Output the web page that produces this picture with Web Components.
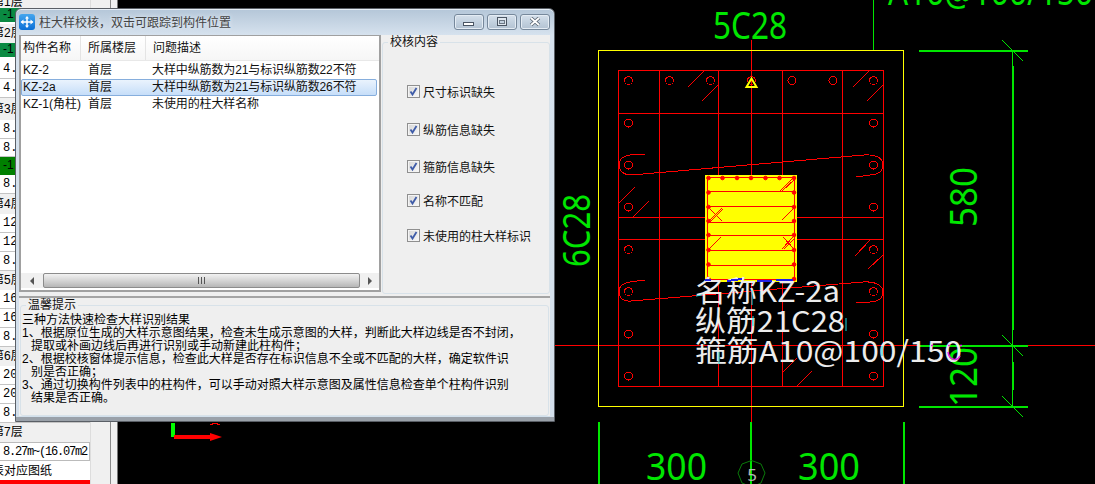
<!DOCTYPE html>
<html>
<head>
<meta charset="utf-8">
<title>柱大样校核</title>
<style>
html,body{margin:0;padding:0;background:#000;overflow:hidden;}
body{font:12px "Liberation Sans","Noto Sans CJK SC",sans-serif;}
</style>
</head>
<body>

<cad-app>
  <side-panel slot="side">
    <side-row kind="head" style="height:8px;line-height:4px">第1层</side-row>
    <side-row kind="green" style="height:14px;line-height:13px">-1</side-row>
    <side-row kind="blank" style="height:2px"></side-row>
    <side-row kind="head">第2层</side-row>
    <side-row kind="green" style="height:14px;line-height:13px">-1</side-row>
    <side-row kind="blank" style="height:3px"></side-row>
    <side-row kind="cell">4.</side-row>
    <side-row kind="cell">4.</side-row>
    <side-row kind="head" style="height:22px;line-height:22px">第3层</side-row>
    <side-row kind="cell">8.</side-row>
    <side-row kind="cell" style="height:18px">8.</side-row>
    <side-row kind="green" style="height:18px;line-height:17px;background:#008000">-1</side-row>
    <side-row kind="cell">8.</side-row>
    <side-row kind="head" style="height:20px;line-height:20px">第4层</side-row>
    <side-row kind="cell">12</side-row>
    <side-row kind="cell">12</side-row>
    <side-row kind="cell">8.</side-row>
    <side-row kind="head">第5层</side-row>
    <side-row kind="cell">16</side-row>
    <side-row kind="cell">16</side-row>
    <side-row kind="cell">8.</side-row>
    <side-row kind="head">第6层</side-row>
    <side-row kind="cell">20</side-row>
    <side-row kind="cell">20</side-row>
    <side-row kind="cell">8.</side-row>
    <side-row kind="head">第7层</side-row>
    <side-row kind="box">8.27m~(16.07m2</side-row>
    <side-row kind="head" style="background:#fff;line-height:20px">表对应图纸</side-row>
    <side-row kind="red"></side-row>
  </side-panel>
  <cad-canvas slot="canvas"></cad-canvas>
</cad-app>

<float-dialog caption="柱大样校核，双击可跟踪到构件位置">
  <issue-list slot="list">
    <issue-row name="KZ-2" floor="首层" desc="大样中纵筋数为21与标识纵筋数22不符"></issue-row>
    <issue-row name="KZ-2a" floor="首层" desc="大样中纵筋数为21与标识纵筋数26不符" selected></issue-row>
    <issue-row name="KZ-1(角柱)" floor="首层" desc="未使用的柱大样名称"></issue-row>
  </issue-list>
  <group-box slot="checks" legend="校核内容" style="height:259px">
    <div style="padding:35px 0 0 24px">
      <check-item style="margin-top:0">尺寸标识缺失</check-item>
      <check-item style="margin-top:24px">纵筋信息缺失</check-item>
      <check-item style="margin-top:23px">箍筋信息缺失</check-item>
      <check-item style="margin-top:20px">名称不匹配</check-item>
      <check-item style="margin-top:21px">未使用的柱大样标识</check-item>
    </div>
  </group-box>
  <group-box slot="tips" legend="温馨提示" style="height:118px">
    <tip-text>
      <div class="line">三种方法快速检查大样识别结果</div>
      <div class="line">1、根据原位生成的大样示意图结果，检查未生成示意图的大样，判断此大样边线是否不封闭，</div>
      <div class="line sub">提取或补画边线后再进行识别或手动新建此柱构件；</div>
      <div class="line">2、根据校核窗体提示信息，检查此大样是否存在标识信息不全或不匹配的大样，确定软件识</div>
      <div class="line sub">别是否正确；</div>
      <div class="line">3、通过切换构件列表中的柱构件，可以手动对照大样示意图及属性信息检查单个柱构件识别</div>
      <div class="line sub">结果是否正确。</div>
    </tip-text>
  </group-box>
</float-dialog>

<script>
const appTemplate = document.createElement("template");
appTemplate.innerHTML = `
<style>
:host{display:flex;width:1095px;height:484px;overflow:hidden;background:#000;}
.side{flex:0 0 91px;}
.split{flex:0 0 27px;display:flex;background:#f0f0f0;}
.split .a{flex:0 0 19px;}
.split .b{flex:0 0 1px;background:#8a8a8a;}
.split .c{flex:1;border-right:1px solid #777;}
.canvas{flex:1;}
</style>
<div class="side"><slot name="side"></slot></div>
<div class="split"><div class="a"></div><div class="b"></div><div class="c"></div></div>
<div class="canvas"><slot name="canvas"></slot></div>
`;
class CadApp extends HTMLElement {
  constructor() {
    super();
    this.attachShadow({ mode: "open" });
    this.shadowRoot.appendChild(appTemplate.content.cloneNode(true));
  }
}
customElements.define("cad-app", CadApp);

const sideTemplate = document.createElement("template");
sideTemplate.innerHTML = `
<style>
:host{display:flex;flex-direction:column;width:90px;height:484px;overflow:hidden;background:#fff;border-right:1px solid #ddd;}
</style>
<slot></slot>
`;
class SidePanel extends HTMLElement {
  constructor() {
    super();
    this.attachShadow({ mode: "open" });
    this.shadowRoot.appendChild(sideTemplate.content.cloneNode(true));
  }
}
customElements.define("side-panel", SidePanel);

const rowTemplate = document.createElement("template");
rowTemplate.innerHTML = `
<style>
:host{display:block;flex:none;box-sizing:border-box;height:19px;line-height:18px;overflow:hidden;white-space:nowrap;color:#000;font-size:12px;padding-left:3px;}
:host([kind=head]){background:#f0f0f0;padding-left:0;text-indent:-8px;font-family:"Liberation Sans","Noto Sans CJK SC",sans-serif;}
:host([kind=green]){background:#0a8a42;padding-left:3px;}
:host([kind=blank]){background:#fff;}
:host([kind=cell]){background:#fff;border-bottom:1px solid #c4c4c4;font-family:"Liberation Mono",monospace;font-size:12px;}
:host([kind=box]){background:#fff;border:1px solid #bbb;border-left:0;font-family:"Liberation Mono",monospace;letter-spacing:-1.2px;}
:host([kind=red]){background:#f00;}
</style>
<slot></slot>
`;
class SideRow extends HTMLElement {
  constructor() {
    super();
    this.attachShadow({ mode: "open" });
    this.shadowRoot.appendChild(rowTemplate.content.cloneNode(true));
  }
}
customElements.define("side-row", SideRow);

// the drawing itself: a free canvas, coordinates are page pixels
function drawing() {
  const cols = [628.5, 873.5];
  const ys = [80.5, 123, 165, 207, 249.5, 291.5, 334, 376];
  let rings = "";
  ys.forEach(y => cols.forEach(x => { rings += `<circle cx="${x}" cy="${y}" r="4"/>`; }));
  [669.5, 710.5, 751.5, 792, 833].forEach(x => { rings += `<circle cx="${x}" cy="80.5" r="4"/>`; });

  const hatch = [
    [688, 87, 704, 71], [702, 101, 718, 85], [853, 87, 869, 71], [867, 101, 883, 85],
    [619, 203, 635, 187], [633, 217, 649, 201], [855, 256, 870, 240], [868, 269, 883, 255],
    [783, 372, 797, 358], [797, 386, 812, 371]
  ].map(l => `<line x1="${l[0]}" y1="${l[1]}" x2="${l[2]}" y2="${l[3]}"/>`).join("");

  const bars = [191.5, 206.5, 222.5, 235.5, 250.5, 265.5]
    .map(y => `<line x1="707" y1="${y}" x2="795" y2="${y}"/>`).join("");

  let nodes = "";
  [708.5, 722.5, 737, 751, 765.5, 779.5, 794].forEach(x => { nodes += `<circle cx="${x}" cy="178" r="1.800"/>`; });
  [192.5, 207, 221, 235, 250, 264.5, 279].forEach(y => {
    nodes += `<circle cx="708.5" cy="${y}" r="1.800"/><circle cx="794" cy="${y}" r="1.800"/>`;
  });

  const ticks = [50.5, 345.5, 406.5]
    .map(y => `<line x1="1002" y1="${y - 10.5}" x2="1023" y2="${y + 10.5}"/>`).join("");

  return `
<svg width="977" height="484" viewBox="118 0 977 484" xmlns="http://www.w3.org/2000/svg">
  <g fill="none" stroke="#f00" stroke-width="1" shape-rendering="crispEdges">
    <rect x="618.5" y="70.5" width="265" height="316"/>
    <path d="M659.5 70V386M718.5 70V386M782.5 70V386M842.5 70V386"/>
    <path d="M751.5 40V484M618 113.5H884M618 217.5H884M618 239.5H884M118 345.5H1095"/>
    <g>${rings}</g>
    <g>${hatch}</g>
    <path d="M645 154L630 155C622 156 619 160 619 165C619 171 624 175 631 175L864 155C876 154 883 158 883 165C883 172 877 175 870 175L856 177"/>
    <path d="M645 280L630 282C622 283 619 287 619 292C619 298 624 302 631 301L863 282C876 281 883 286 883 292C883 299 877 302 870 302L856 303"/>
    <path d="M210 425L215 423L220 425"/>
  </g>

  <rect x="705" y="175" width="92" height="107" fill="#ff0"/>
  <g fill="none" stroke="#f00" stroke-width="1" shape-rendering="crispEdges">
    <rect x="707.5" y="177.5" width="87" height="102"/>
    ${bars}
    <path d="M780 191L794 177M782 191L795 179"/>
    <path d="M708 222L722 208M710 222L723 209M710 209L722 221"/>
    <path d="M782 220L794 208M708 250L721 237M782 249L794 236M784 249L795 238M783 237L794 249"/>
  </g>
  <g fill="#ff0000" stroke="#f00" stroke-width="1">${nodes}</g>

  <path d="M751.5 78.5L746.5 87H756.5Z" fill="none" stroke="#ff0" stroke-width="2"/>

  <rect x="598.5" y="50.5" width="305" height="356" fill="none" stroke="#ff0" shape-rendering="crispEdges"/>

  <g fill="#00e600" stroke="none" shape-rendering="crispEdges">
    <rect x="919" y="50" width="109" height="2"/>
    <rect x="919" y="345" width="109" height="2"/>
    <rect x="919" y="406" width="109" height="2"/>
    <rect x="1012" y="66" width="2" height="264"/>
    <rect x="1012" y="362" width="2" height="28"/>
    <rect x="598" y="422" width="2" height="62"/>
    <rect x="750" y="422" width="2" height="62"/>
    <rect x="903" y="422" width="2" height="62"/>
    <rect x="873" y="0" width="1" height="50"/>
    <rect x="1012" y="50" width="1" height="16"/>
    <rect x="1012" y="330" width="1" height="32"/>
    <rect x="1012" y="390" width="1" height="16"/>
    <rect x="171" y="423" width="4" height="14" fill="#00ff00"/>
    <rect x="174" y="435" width="37" height="4" fill="#f00"/>
  </g>
  <path d="M210 433L222 437L210 441Z" fill="#f00"/>
  <g stroke="#00e600" stroke-width="1">${ticks}</g>
  <path d="M751.5 460.500L761 464L765 473L761 483L751.500 487L742 483L738 473L742 464Z" fill="none" stroke="#0a7a0a"/>
  <text x="752" y="481" fill="#b5b5b5" font-size="17" font-family="Noto Sans" text-anchor="middle">5</text>

  <g fill="#00e600" font-family="Noto Sans" font-size="38">
    <text x="713" y="39" textLength="74" lengthAdjust="spacingAndGlyphs">5C28</text>
    <text x="888" y="5" textLength="205" lengthAdjust="spacingAndGlyphs">A10@100/150</text>
    <text x="646" y="480" textLength="61" lengthAdjust="spacingAndGlyphs">300</text>
    <text x="798" y="480" textLength="62" lengthAdjust="spacingAndGlyphs">300</text>
    <text transform="translate(590 267) rotate(-90)" textLength="73" lengthAdjust="spacingAndGlyphs">6C28</text>
    <text transform="translate(977 227) rotate(-90)" textLength="60" lengthAdjust="spacingAndGlyphs">580</text>
    <text transform="translate(977 407) rotate(-90)" textLength="60" lengthAdjust="spacingAndGlyphs">120</text>
  </g>

  <g fill="#ececec" font-size="29" font-family="'Noto Sans CJK SC',sans-serif">
    <text x="695" y="302" textLength="145" lengthAdjust="spacingAndGlyphs">名称KZ-2a</text>
    <text x="695" y="332" textLength="150" lengthAdjust="spacingAndGlyphs">纵筋21C28</text>
    <text x="695" y="362" textLength="267" lengthAdjust="spacingAndGlyphs">箍筋A10@100/150</text>
  </g>
  <g fill="none" stroke="#2020e8" stroke-width="2" shape-rendering="crispEdges">
    <path d="M705 280H711M727 281L742 279M757 281H772M776 280H793"/>
  </g>
  <g fill="none" stroke="#19d8e0" stroke-width="1">
    <path d="M696 296L702 295M752 290V305M753 316V326M846 318V331M719 352V364M882 346V356"/>
  </g>
  <g fill="none" stroke="#e020e0" stroke-width="1.500">
    <path d="M948 352C949 360 957 362 960 356"/>
    <path d="M931 345.500H933M948 345.500H950M960 345.500H962"/>
  </g>
</svg>`;
}

class CadCanvas extends HTMLElement {
  constructor() {
    super();
    this.attachShadow({ mode: "open" });
    this.shadowRoot.innerHTML = `
<style>
:host{display:block;width:977px;height:484px;background:#000;overflow:hidden;}
svg{display:block;}
</style>` + drawing();
  }
}
customElements.define("cad-canvas", CadCanvas);

const dialogTemplate = document.createElement("template");
dialogTemplate.innerHTML = `
<style>
:host{position:absolute;left:15px;top:8px;width:540px;height:414px;box-sizing:border-box;
  display:flex;flex-direction:column;border:1px solid #5a5f66;border-radius:6px 6px 0 0;padding:0 4px 0 3px;
  background:linear-gradient(to top,#9aa1a9 4px,transparent 4px),linear-gradient(#b4c6d8,#d6e2ee 26px,#d3dfeb);
  box-shadow:inset 0 1px 0 #e6eef6;color:#000;font:12px "Liberation Sans","Noto Sans CJK SC",sans-serif;}
.title{flex:0 0 26px;display:flex;align-items:center;}
.cap{margin:-1px 0 0 4px;color:#444;white-space:nowrap;flex:1;text-shadow:0 0 4px #eef4fa;}
.btns{display:flex;gap:3px;margin:-1px 0 0 0;}
.body{flex:0 0 382px;box-sizing:border-box;background:#efefef;border-bottom:1px solid #d2e0ec;display:flex;flex-direction:column;}
.top{flex:0 0 261px;display:flex;}
.gap{flex:0 0 1px;}
.bottom{flex:1;border-top:2px solid #a4a4a4;padding:0 1px;}
</style>
<div class="title">
  <svg width="16" height="16" viewBox="0 0 16 16">
    <defs><linearGradient id="ic" x1="0" y1="0" x2="0" y2="1"><stop offset="0" stop-color="#45a6ee"/><stop offset="1" stop-color="#0a6fd6"/></linearGradient></defs>
    <rect width="16" height="16" rx="3" fill="url(#ic)"/>
    <path d="M2.500 8H13.500M8 4V12" stroke="#fff" stroke-width="1.500" fill="none"/>
    <path d="M1.500 8L4.500 5.500V10.500ZM14.500 8L11.500 5.500V10.500ZM8 2L6 4.500H10ZM8 14L6 11.500H10Z" fill="#fff"/>
  </svg>
  <div class="cap"></div>
  <div class="btns">
    <title-btn kind="min"></title-btn>
    <title-btn kind="max"></title-btn>
    <title-btn kind="close"></title-btn>
  </div>
</div>
<div class="body">
  <div class="top">
    <slot name="list"></slot>
    <div class="gap"></div>
    <slot name="checks"></slot>
  </div>
  <div class="bottom"><slot name="tips"></slot></div>
</div>
`;
class FloatDialog extends HTMLElement {
  constructor() {
    super();
    this.attachShadow({ mode: "open" });
    this.shadowRoot.appendChild(dialogTemplate.content.cloneNode(true));
    this.shadowRoot.querySelector(".cap").innerText = this.getAttribute("caption");
  }
}

const btnTemplate = document.createElement("template");
btnTemplate.innerHTML = `
<style>
:host{display:flex;width:30px;height:16px;box-sizing:border-box;align-items:center;justify-content:center;
  border:1px solid #76889b;border-radius:3px;background:linear-gradient(#d5e0eb,#c3d1df 50%,#b2c2d2);box-shadow:inset 0 0 0 1px #e4ecf4;}
svg{display:block;}
</style>
<svg width="14" height="10" viewBox="0 0 14 10"></svg>
`;
class TitleBtn extends HTMLElement {
  constructor() {
    super();
    this.attachShadow({ mode: "open" });
    this.shadowRoot.appendChild(btnTemplate.content.cloneNode(true));
    const icons = {
      min: `<rect x="1.500" y="5.500" width="10" height="3" fill="#fff" stroke="#4a5563"/>`,
      max: `<rect x="2.500" y="0.500" width="9" height="8" fill="#dfe7ef" stroke="#4a5563"/><rect x="4.500" y="3.500" width="5" height="3" fill="#c3d1df" stroke="#6b7785"/>`,
      close: `<path d="M3 1L11 8M11 1L3 8" stroke="#5b6672" stroke-width="3.500"/><path d="M3 1L11 8M11 1L3 8" stroke="#fff" stroke-width="1.800"/>`
    };
    this.shadowRoot.querySelector("svg").innerHTML = icons[this.getAttribute("kind")];
  }
}
customElements.define("title-btn", TitleBtn);
customElements.define("float-dialog", FloatDialog);

const listTemplate = document.createElement("template");
listTemplate.innerHTML = `
<style>
:host{display:flex;flex-direction:column;flex:0 0 362px;box-sizing:border-box;height:257px;background:#fff;
  border:2px solid #a0a0a0;border-top-width:1px;}
.head{flex:0 0 24px;display:flex;align-items:center;background:linear-gradient(#fff,#f6f6f6);border-bottom:1px solid #e8e8e8;margin-bottom:1px;box-sizing:border-box;}
.head div{box-sizing:border-box;height:100%;line-height:24px;border-right:1px solid #e4e4e4;padding-left:7px;white-space:nowrap;color:#111;}
.head div:first-child{width:60px;padding-left:2px;}
.head div:nth-child(2){width:65px;}
.head div:nth-child(3){flex:1;border:0;}
.rows{flex:1;display:flex;flex-direction:column;overflow:hidden;}
.bar{flex:0 0 15px;display:flex;margin-bottom:2px;background:#f0f0f0;}
.arrow{flex:0 0 22px;display:flex;align-items:center;justify-content:center;}
.arrow svg{display:block;}
.thumb{flex:1;box-sizing:border-box;display:flex;align-items:center;justify-content:center;gap:1px;border:1px solid #8c8c8c;border-radius:2px;
  background:linear-gradient(#f2f2f2,#d8d8d8 45%,#b6b6b6);}
.thumb i{display:block;width:1px;height:7px;background:#555;margin-right:1px;}
</style>
<div class="head"><div>构件名称</div><div>所属楼层</div><div>问题描述</div></div>
<div class="rows"><slot></slot></div>
<div class="bar">
  <div class="arrow"><svg width="6" height="8"><path d="M5 0V8L1 4Z" fill="#555"/></svg></div>
  <div class="thumb"><i></i><i></i><i></i></div>
  <div class="arrow" style="flex-basis:19px"><svg width="6" height="8"><path d="M1 0V8L5 4Z" fill="#555"/></svg></div>
</div>
`;
class IssueList extends HTMLElement {
  constructor() {
    super();
    this.attachShadow({ mode: "open" });
    this.shadowRoot.appendChild(listTemplate.content.cloneNode(true));
  }
}
customElements.define("issue-list", IssueList);

const issueTemplate = document.createElement("template");
issueTemplate.innerHTML = `
<style>
:host{display:grid;grid-template-columns:65px 65px 1fr;flex:none;box-sizing:border-box;height:17px;line-height:15px;padding-left:1px;margin-right:2px;border:1px solid transparent;white-space:nowrap;color:#111;}
:host([selected]){background:linear-gradient(#eaf3fd,#c6def9);border-color:#86aedd;border-radius:2px;}
.desc{letter-spacing:-.12px;margin-left:-1px;}
</style>
<div class="name"></div><div class="floor"></div><div class="desc"></div>
`;
class IssueRow extends HTMLElement {
  constructor() {
    super();
    this.attachShadow({ mode: "open" });
    this.shadowRoot.appendChild(issueTemplate.content.cloneNode(true));
    this.shadowRoot.querySelector(".name").innerText = this.getAttribute("name");
    this.shadowRoot.querySelector(".floor").innerText = this.getAttribute("floor");
    this.shadowRoot.querySelector(".desc").innerText = this.getAttribute("desc");
  }
}
customElements.define("issue-row", IssueRow);

const groupTemplate = document.createElement("template");
groupTemplate.innerHTML = `
<style>
:host{display:block;flex:1;min-width:0;}
fieldset{box-sizing:border-box;height:100%;margin:0;padding:0;border:1px solid #d8e2e9;border-radius:3px;background:#efefef;min-width:0;}
legend{margin-left:5px;padding:0 2px;line-height:14px;height:14px;color:#111;white-space:nowrap;}
</style>
<fieldset><legend></legend><slot></slot></fieldset>
`;
class GroupBox extends HTMLElement {
  constructor() {
    super();
    this.attachShadow({ mode: "open" });
    this.shadowRoot.appendChild(groupTemplate.content.cloneNode(true));
    this.shadowRoot.querySelector("legend").innerText = this.getAttribute("legend");
  }
}
customElements.define("group-box", GroupBox);

const checkTemplate = document.createElement("template");
checkTemplate.innerHTML = `
<style>
:host{display:flex;align-items:center;height:14px;gap:3px;white-space:nowrap;color:#111;}
svg{display:block;flex:none;}
</style>
<svg width="13" height="13" viewBox="0 0 13 13">
  <defs><linearGradient id="cb" x1="0" y1="0" x2="1" y2="1"><stop offset="0" stop-color="#d8d8d8"/><stop offset="1" stop-color="#f6f6f6"/></linearGradient></defs>
  <rect x="0.500" y="0.500" width="12" height="12" fill="#f4f4f4" stroke="#8f8f8f"/>
  <rect x="2" y="2" width="9" height="9" fill="url(#cb)"/>
  <path d="M3.500 6.500L5.500 9.500L9.500 3" fill="none" stroke="#3f5ca8" stroke-width="1.800"/>
</svg>
<slot></slot>
`;
class CheckItem extends HTMLElement {
  constructor() {
    super();
    this.attachShadow({ mode: "open" });
    this.shadowRoot.appendChild(checkTemplate.content.cloneNode(true));
  }
}
customElements.define("check-item", CheckItem);

const tipTemplate = document.createElement("template");
tipTemplate.innerHTML = `
<style>
:host{display:block;padding:2px 0 0 1px;line-height:13px;color:#000;}
::slotted(.line){white-space:nowrap;height:13px;}
::slotted(.sub){padding-left:9px;}
</style>
<slot></slot>
`;
class TipText extends HTMLElement {
  constructor() {
    super();
    this.attachShadow({ mode: "open" });
    this.shadowRoot.appendChild(tipTemplate.content.cloneNode(true));
  }
}
customElements.define("tip-text", TipText);
</script>
</body>
</html>
